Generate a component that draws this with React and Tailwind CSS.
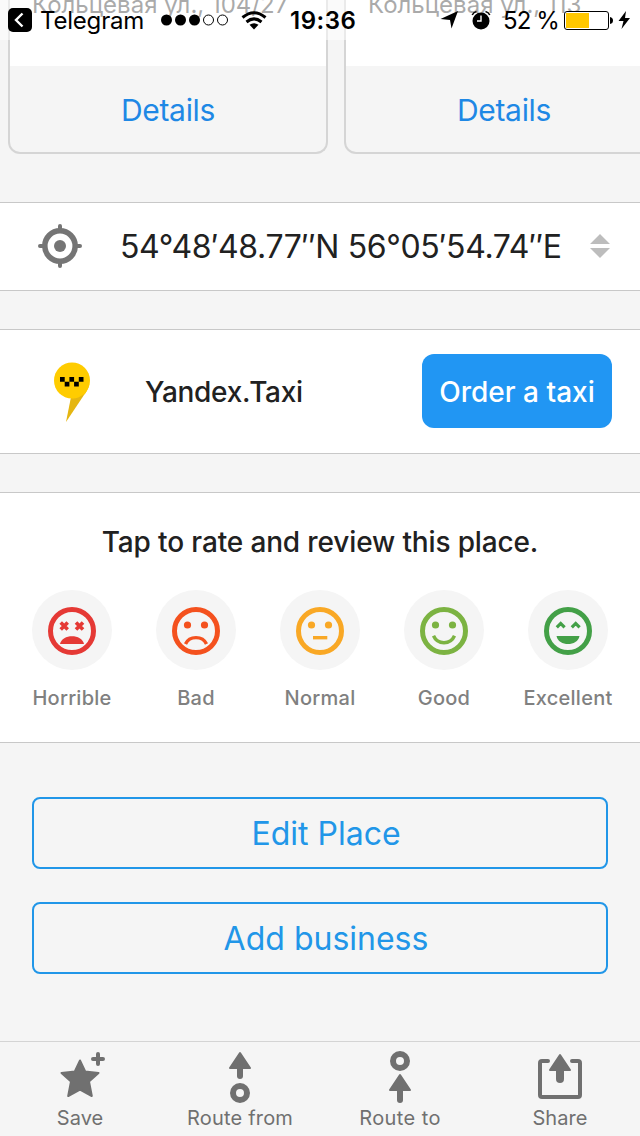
const ratings = [
  {
    label: "Horrible",
    color: "text-[#e53935]",
    face: (
      <>
        <path d="M12.700 15.500l7 7m0-7l-7 7M28 15.500l7 7m0-7l-7 7" stroke="currentColor" strokeWidth="3.600" fill="none" />
        <path d="M12 37C14 26.500 34 26.500 36 37Z" fill="currentColor" />
      </>
    ),
  },
  {
    label: "Bad",
    color: "text-[#f4511e]",
    face: (
      <>
        <circle cx="15.500" cy="18" r="3.600" fill="currentColor" />
        <circle cx="32.500" cy="18" r="3.600" fill="currentColor" />
        <path d="M13.500 37C17.500 28.500 30.500 28.500 34.500 37" stroke="currentColor" strokeWidth="3.400" fill="none" />
      </>
    ),
  },
  {
    label: "Normal",
    color: "text-[#f9a825]",
    face: (
      <>
        <circle cx="15.500" cy="18" r="3.600" fill="currentColor" />
        <circle cx="32.500" cy="18" r="3.600" fill="currentColor" />
        <path d="M17 30.700h14.300" stroke="currentColor" strokeWidth="3.400" fill="none" />
      </>
    ),
  },
  {
    label: "Good",
    color: "text-[#7cb342]",
    face: (
      <>
        <circle cx="15.500" cy="18" r="3.600" fill="currentColor" />
        <circle cx="32.500" cy="18" r="3.600" fill="currentColor" />
        <path d="M13.500 28.800C17.500 38 30.500 38 34.500 28.800" stroke="currentColor" strokeWidth="3.400" fill="none" />
      </>
    ),
  },
  {
    label: "Excellent",
    color: "text-[#43a047]",
    face: (
      <>
        <path d="M12.800 20.300l3.900-3.900 3.900 3.900M27.800 20.300l3.900-3.900 3.900 3.900" stroke="currentColor" strokeWidth="3.200" fill="none" />
        <path d="M12.500 29h23C33.500 39.700 14.500 39.700 12.500 29Z" fill="currentColor" />
      </>
    ),
  },
];

function StatusBar() {
  return (
    <header className="absolute inset-x-0 top-0 z-10 flex h-10 items-center bg-white/50 pl-2 text-2xl leading-10 text-black">
      <svg width="24" height="24" viewBox="0 0 24 24" className="shrink-0">
        <rect width="24" height="24" rx="5" />
        <path d="M14.500 5.500L8 12l6.500 6.500" stroke="#fff" strokeWidth="2.400" fill="none" />
      </svg>
      <span className="ml-2 w-[120px] whitespace-nowrap pt-px tracking-[-0.2px]">Telegram</span>
      <svg width="69" height="12" viewBox="0 0 69 12" className="shrink-0">
        <circle cx="6.500" cy="6" r="5.500" />
        <circle cx="20.500" cy="6" r="5.500" />
        <circle cx="34.500" cy="6" r="5.500" />
        <circle cx="48.500" cy="6" r="5" fill="none" stroke="#000" />
        <circle cx="62.500" cy="6" r="5" fill="none" stroke="#000" />
      </svg>
      <svg width="26" height="19" viewBox="0 0 26 19" className="ml-[12px] shrink-0">
        <path d="M1.500 6.500Q13-3 24.500 6.500M5.500 11Q13 4.800 20.500 11" fill="none" stroke="#000" strokeWidth="3" />
        <path d="M8.500 13.800Q13 10.500 17.500 13.800L13 18.500Z" />
      </svg>
      <span className="ml-[23px] w-[150px] pt-px font-semibold tracking-[0.5px]">19:36</span>
      <svg width="19" height="18" viewBox="0 0 19 18" className="shrink-0">
        <path d="M18 0L11.500 17.500 10 9 0.500 8Z" />
      </svg>
      <svg width="20" height="20" viewBox="0 0 20 20" className="ml-[12px] shrink-0">
        <circle cx="10" cy="11" r="8.500" />
        <path d="M1.200 5Q2.500 2.200 5.500 1.500M18.800 5Q17.500 2.200 14.500 1.500" fill="none" stroke="#000" strokeWidth="1.600" />
        <path d="M10 5.500V11H6" fill="none" stroke="#fff" strokeWidth="1.400" />
      </svg>
      <span className="ml-[12px] w-[61px] whitespace-nowrap pt-px tracking-[-0.9px]">52 %</span>
      <svg width="50" height="20" viewBox="0 0 50 20" className="shrink-0">
        <rect x="0.500" y="1.500" width="44" height="18" rx="2.500" fill="#fff" stroke="#000" />
        <rect x="2" y="3" width="23" height="15" fill="#ffc700" />
        <path d="M46 7q3 0.500 3 3.500t-3 3.500Z" />
      </svg>
      <svg width="13" height="18" viewBox="0 0 13 18" className="ml-[4px] shrink-0">
        <path d="M8 0L0.500 10H5.500L3.500 18 12 7H7Z" />
      </svg>
    </header>
  );
}

function PlaceCard({ address }) {
  return (
    <div className="h-[154px] w-80 shrink-0 overflow-hidden rounded-b-xl border-2 border-t-0 border-[#d5d5d5]">
      <div className="h-[66px] bg-white pl-[22px]">
        <p className="-translate-y-[11px] whitespace-nowrap text-2xl leading-8 text-[#555]">{address}</p>
      </div>
      <button className="flex h-[86px] w-full items-center justify-center pt-[3px] text-[30px] tracking-[-0.3px] text-[#1e88e5]">
        Details
      </button>
    </div>
  );
}

function Target() {
  return (
    <svg width="44" height="44" viewBox="0 0 44 44" className="-mt-0.5 shrink-0 text-[#757575]" stroke="currentColor" fill="none">
      <circle cx="22" cy="22" r="15.200" strokeWidth="5.600" />
      <circle cx="22" cy="22" r="6" fill="currentColor" stroke="none" />
      <path d="M22 2v5M22 37v5M2 22h5M37 22h5" strokeWidth="4" strokeLinecap="round" />
    </svg>
  );
}

function TaxiLogo() {
  return (
    <svg width="36" height="60" viewBox="0 0 36 60" className="shrink-0">
      <path d="M17 35L12 60 32 30 35 24Z" fill="#e5b611" />
      <circle cx="18" cy="18.500" r="18" fill="#fc0" />
      <path d="M18 36.500C26 36 36 29 36 18.500Q36 24 31 32Z" fill="#fc0" />
      <path d="M6 15h4.700v4.700H6zM15.400 15h4.700v4.700h-4.700zM24.800 15h4.700v4.700h-4.700zM10.700 19.700h4.700v4.700h-4.700zM20.100 19.700h4.700v4.700h-4.700z" />
    </svg>
  );
}

const tabs = [
  {
    label: "Save",
    tracking: "tracking-[0px]",
    icon: (
      <>
        <path d="M26 9.500L31.200 20.500 44.500 22 35 30.500 37.800 45 26 38.500 14.200 45 17 30.500 7.500 22 20.800 20.500Z" strokeWidth="2" strokeLinejoin="round" />
        <path d="M44 3v10M39 8h10" strokeWidth="4" strokeLinecap="round" />
      </>
    ),
  },
  {
    label: "Route from",
    tracking: "tracking-[0.2px]",
    icon: (
      <>
        <path d="M26 2L36 17H16Z" strokeWidth="2" strokeLinejoin="round" />
        <path d="M26 16v9" strokeWidth="6" strokeLinecap="round" />
        <circle cx="26" cy="42" r="7" fill="none" strokeWidth="6" />
      </>
    ),
  },
  {
    label: "Route to",
    tracking: "tracking-[0.4px]",
    icon: (
      <>
        <circle cx="26" cy="10" r="7" fill="none" strokeWidth="6" />
        <path d="M26 24L36 39H16Z" strokeWidth="2" strokeLinejoin="round" />
        <path d="M26 38v11" strokeWidth="6" strokeLinecap="round" />
      </>
    ),
  },
  {
    label: "Share",
    tracking: "tracking-[0.1px]",
    icon: (
      <>
        <path d="M14 10H8Q6 10 6 12V44Q6 46 8 46H44Q46 46 46 44V12Q46 10 44 10H38" fill="none" strokeWidth="4" strokeLinecap="round" />
        <path d="M26 4L36 19H16Z" strokeWidth="2" strokeLinejoin="round" />
        <path d="M26 18v10" strokeWidth="8" strokeLinecap="round" />
      </>
    ),
  },
];

export default function App() {
  return (
    <div className="relative flex h-[1136px] w-[640px] flex-col overflow-hidden bg-[#f5f5f5] font-['Inter','Noto_Sans',sans-serif] text-[#212121]">
      <StatusBar />

      {/* Nearby places */}
      <div className="flex shrink-0 gap-4 overflow-hidden pl-2">
        <PlaceCard address="Кольцевая ул., 104/27" />
        <PlaceCard address="Кольцевая ул., 113" />
      </div>

      {/* Coordinates */}
      <section className="mt-12 flex h-[89px] shrink-0 items-center border-y border-[#c8c8c8] bg-white pl-[38px]">
        <Target />
        <span className="ml-[38px] w-[469px] whitespace-nowrap text-[32px] tracking-[-0.37px]">54°48′48.77″N 56°05′54.74″E</span>
        <svg width="22" height="24" viewBox="0 0 22 24" className="-mt-0.5 shrink-0" fill="#bdbdbd">
          <path d="M1 10L11 0 21 10ZM1 14L11 24 21 14Z" />
        </svg>
      </section>

      <section className="mt-[38px] flex h-[125px] shrink-0 items-center border-y border-[#c8c8c8] bg-white pl-[54px]">
        <TaxiLogo />
        <span className="ml-[55px] w-[277px] text-[28px] font-medium tracking-[-0.3px]">Yandex.Taxi</span>
        <button className="-mt-px h-[74px] w-[190px] whitespace-nowrap rounded-xl bg-[#2196f3] pt-0.5 text-[28px] font-medium text-white">
          Order a taxi
        </button>
      </section>

      {/* Rating */}
      <section className="mt-[38px] h-[251px] shrink-0 border-y border-[#c8c8c8] bg-white">
        <h2 className="mt-7 text-center text-[28px] font-medium leading-[42px] tracking-[-0.14px]">Tap to rate and review this place.</h2>
        <div className="mt-[27px] flex justify-between px-[10px]">
          {ratings.map((rating) => (
            <div key={rating.label} className="flex w-[124px] flex-col items-center">
              <div className={`flex size-20 items-center justify-center rounded-full bg-[#f5f5f5] pt-0.5 ${rating.color}`}>
                <svg width="48" height="48" viewBox="0 0 48 48">
                  <circle cx="24" cy="24" r="21.500" fill="none" stroke="currentColor" strokeWidth="5" />
                  {rating.face}
                </svg>
              </div>
              <span className="mt-3 text-xl font-medium leading-8 tracking-[0.25px] text-[#808080]">{rating.label}</span>
            </div>
          ))}
        </div>
      </section>

      <div className="mt-[54px] flex shrink-0 flex-col gap-[33px] px-8">
        <button className="h-[72px] rounded-lg border-2 border-[#2196e8] pl-3 pt-0.5 text-[32px] text-[#2196e8]">Edit Place</button>
        <button className="h-[72px] rounded-lg border-2 border-[#2196e8] pl-3 pt-0.5 text-[32px] text-[#2196e8]">Add business</button>
      </div>

      {/* Bottom toolbar */}
      <nav className="mt-auto flex h-[95px] shrink-0 border-t border-[#d4d4d4] pt-[9px] text-[#707070]">
        {tabs.map((tab) => (
          <button key={tab.label} className="flex w-40 flex-col items-center">
            <svg width="52" height="52" viewBox="0 0 52 52" fill="currentColor" stroke="currentColor" className="shrink-0">
              {tab.icon}
            </svg>
            <span className={`mt-px text-xl leading-7 ${tab.tracking}`}>{tab.label}</span>
          </button>
        ))}
      </nav>
    </div>
  );
}
